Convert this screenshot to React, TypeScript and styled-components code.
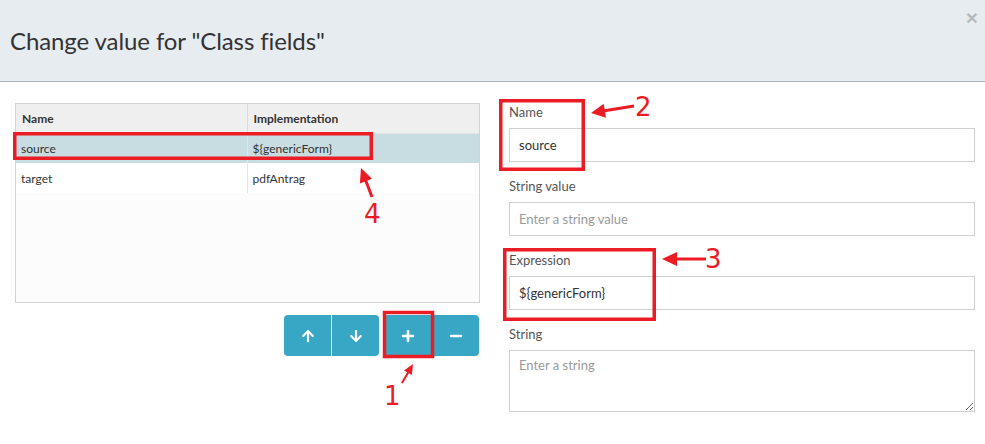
import React from 'react';
import styled, { createGlobalStyle } from 'styled-components';
import { FaArrowUp, FaArrowDown, FaPlus, FaMinus } from 'react-icons/fa';

const GlobalStyle = createGlobalStyle`
  html, body {
    margin: 0;
    padding: 0;
    background: #fff;
    font-family: Lato, "Open Sans", sans-serif;
    color: #333;
  }
  * { box-sizing: border-box; }
`;

const rows = [
  { name: 'source', impl: '${genericForm}', selected: true },
  { name: 'target', impl: 'pdfAntrag', selected: false },
];

const fields = [
  { label: 'Name', value: 'source', placeholder: '' },
  { label: 'String value', value: '', placeholder: 'Enter a string value' },
  { label: 'Expression', value: '${genericForm}', placeholder: '' },
];

const RED = '#ec1c24';

// arrow head polygon from tail -> tip
const arrowHead = (x1: number, y1: number, x2: number, y2: number, len: number, half: number): string => {
  const dx = x2 - x1;
  const dy = y2 - y1;
  const d = Math.sqrt(dx * dx + dy * dy);
  const ux = dx / d;
  const uy = dy / d;
  const bx = x2 - ux * len;
  const by = y2 - uy * len;
  return `${x2},${y2} ${bx - uy * half},${by + ux * half} ${bx + uy * half},${by - ux * half}`;
};

const arrows = [
  { x1: 634, y1: 106, x2: 591, y2: 113, w: 3, len: 14, half: 7 },
  { x1: 706, y1: 259, x2: 662, y2: 259, w: 3, len: 15, half: 7 },
  { x1: 372, y1: 197, x2: 361, y2: 168, w: 3, len: 14, half: 6.5 },
  { x1: 402, y1: 383, x2: 413, y2: 364, w: 2, len: 10, half: 4.5 },
];

const boxes = [
  { x: 384.5, y: 312.5, w: 48, h: 44 },
  { x: 500.75, y: 100.75, w: 82.5, h: 68.5 },
  { x: 504.75, y: 249.75, w: 149.5, h: 69.5 },
  { x: 14.75, y: 133.75, w: 356.5, h: 24.5 },
];

const labels = [
  { t: '1', x: 384, y: 405 },
  { t: '2', x: 635, y: 116 },
  { t: '3', x: 705, y: 268 },
  { t: '4', x: 364, y: 223 },
];

const App = (): JSX.Element => {
  return (
    <>
      <GlobalStyle />
      <Page>
        <Header>
          <Title>Change value for "Class fields"</Title>
          <Close>×</Close>
        </Header>
        <Body>
          <LeftCol>
            <TableBox>
              <Grid>
                <colgroup>
                  <col style={{ width: 231 }} />
                  <col />
                </colgroup>
                <thead>
                  <tr>
                    <Th>Name</Th>
                    <Th>Implementation</Th>
                  </tr>
                </thead>
                <tbody>
                  {rows.map((row) => (
                    <Tr key={row.name} selected={row.selected}>
                      <Td>{row.name}</Td>
                      <Td>{row.impl}</Td>
                    </Tr>
                  ))}
                </tbody>
              </Grid>
            </TableBox>
            <Toolbar>
              <BtnGroup>
                <Btn><FaArrowUp /></Btn>
                <Btn><FaArrowDown /></Btn>
              </BtnGroup>
              <BtnGroup>
                <Btn><FaPlus /></Btn>
                <Btn><FaMinus /></Btn>
              </BtnGroup>
            </Toolbar>
          </LeftCol>
          <RightCol>
            {fields.map((f) => (
              <Field key={f.label}>
                <Label>{f.label}</Label>
                <Input readOnly value={f.value} placeholder={f.placeholder} />
              </Field>
            ))}
            <Field>
              <Label>String</Label>
              <TextArea placeholder="Enter a string" />
            </Field>
          </RightCol>
        </Body>
        <Markup width={985} height={444} viewBox="0 0 985 444">
          {boxes.map((b, i) => (
            <rect key={i} x={b.x} y={b.y} width={b.w} height={b.h} fill="none" stroke={RED} strokeWidth={3.5} />
          ))}
          {arrows.map((a, i) => {
            const d = Math.hypot(a.x2 - a.x1, a.y2 - a.y1);
            const ex = a.x2 - ((a.x2 - a.x1) / d) * (a.len - 2);
            const ey = a.y2 - ((a.y2 - a.y1) / d) * (a.len - 2);
            return (
              <g key={i}>
                <line x1={a.x1} y1={a.y1} x2={ex} y2={ey} stroke={RED} strokeWidth={a.w} />
                <polygon points={arrowHead(a.x1, a.y1, a.x2, a.y2, a.len, a.half)} fill={RED} />
              </g>
            );
          })}
          {labels.map((l) => (
            <Num key={l.t} x={l.x} y={l.y}>{l.t}</Num>
          ))}
        </Markup>
      </Page>
    </>
  );
};

export default App;

const Page = styled.div`
  position: relative;
  width: 985px;
  height: 444px;
  overflow: hidden;
`;
const Header = styled.div`
  position: relative;
  height: 82px;
  background: #e7ecf0;
  border-bottom: 1px solid #a7b4c1;
  display: flex;
  align-items: center;
  padding: 0 10px 0 10px;
`;
const Title = styled.h4`
  margin: 0;
  font-size: 24px;
  font-weight: 400;
  color: #333;
  letter-spacing: -0.1px;
`;
const Close = styled.span`
  position: absolute;
  right: 7px;
  top: 6px;
  font-family: "Liberation Sans", Arial, sans-serif;
  font-size: 21px;
  font-weight: 700;
  color: #b6babd;
`;
const Body = styled.div`
  display: grid;
  grid-template-columns: 465px 466px;
  column-gap: 29px;
  padding: 21px 10px 0 15px;
`;
const LeftCol = styled.div`
  display: flex;
  flex-direction: column;
`;
const TableBox = styled.div`
  height: 200px;
  border: 1px solid #d3d3d3;
  background: #fcfcfc;
`;
const Grid = styled.table`
  width: 100%;
  border-collapse: collapse;
  table-layout: fixed;
  font-size: 12px;
`;
const Th = styled.th`
  height: 29px;
  text-align: left;
  font-weight: 700;
  padding: 0 6px;
  background: #efefef;
  color: #333;
  border-bottom: 1px solid #e2e2e2;
  & + & { border-left: 1px solid #dcdcdc; }
`;
const Tr = styled.tr<{ selected: boolean }>`
  background: ${(p) => (p.selected ? '#c8dde1' : '#fff')};
`;
const Td = styled.td`
  height: 30px;
  padding: 0 5px;
  color: #333;
  & + & { border-left: 1px solid #e4e4e4; }
`;
const Toolbar = styled.div`
  display: flex;
  justify-content: flex-end;
  gap: 5px;
  margin-top: 12px;
  padding-right: 1px;
`;
const BtnGroup = styled.div`
  display: flex;
  border-radius: 4px;
  overflow: hidden;
`;
const Btn = styled.button`
  width: 47px;
  height: 41px;
  border: none;
  padding: 0;
  background: #38a7c5;
  color: #fff;
  display: flex;
  align-items: center;
  justify-content: center;
  font-size: 14px;
  & + & { border-left: 1px solid #e6f3f7; width: 48px; }
`;
const RightCol = styled.div`
  display: flex;
  flex-direction: column;
  padding-top: 1px;
`;
const Field = styled.div`
  display: flex;
  flex-direction: column;
  margin-bottom: 16px;
`;
const Label = styled.label`
  height: 20px;
  line-height: 17px;
  margin-bottom: 4px;
  font-size: 13px;
  color: #555;
`;
const Input = styled.input`
  height: 34px;
  border: 1px solid #cfcfcf;
  border-radius: 0;
  padding: 0 9px;
  font-family: Lato, sans-serif;
  font-size: 13px;
  color: #333;
  outline: none;
  &::placeholder { color: #9a9a9a; }
`;
const TextArea = styled.textarea`
  height: 62px;
  border: 1px solid #cfcfcf;
  border-radius: 0;
  padding: 6px 9px;
  font-family: Lato, sans-serif;
  font-size: 13px;
  color: #333;
  resize: vertical;
  outline: none;
  &::placeholder { color: #9a9a9a; }
`;
const Markup = styled.svg`
  position: absolute;
  left: 0;
  top: 0;
  pointer-events: none;
`;
const Num = styled.text`
  font-family: "DejaVu Sans", sans-serif;
  font-size: 26px;
  fill: ${RED};
`;
